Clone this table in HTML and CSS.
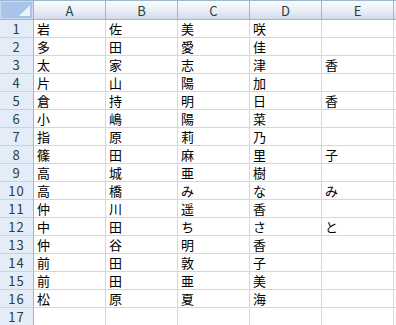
FILE: index.html
```html
<!DOCTYPE html>
<html>
<head>
<meta charset="utf-8">
<link rel="stylesheet" href="styles.css">
</head>
<body>
<div class="sheet">
  <div class="corner"><span class="tri"></span></div>
  <div class="ch">A</div><div class="ch">B</div><div class="ch">C</div><div class="ch">D</div><div class="ch">E</div><div class="ch ch-x"></div>

  <div class="rh">1</div><div class="c">岩</div><div class="c">佐</div><div class="c">美</div><div class="c">咲</div><div class="c"></div><div class="c cx"></div>
  <div class="rh">2</div><div class="c">多</div><div class="c">田</div><div class="c">愛</div><div class="c">佳</div><div class="c"></div><div class="c cx"></div>
  <div class="rh">3</div><div class="c">太</div><div class="c">家</div><div class="c">志</div><div class="c">津</div><div class="c">香</div><div class="c cx"></div>
  <div class="rh">4</div><div class="c">片</div><div class="c">山</div><div class="c">陽</div><div class="c">加</div><div class="c"></div><div class="c cx"></div>
  <div class="rh">5</div><div class="c">倉</div><div class="c">持</div><div class="c">明</div><div class="c">日</div><div class="c">香</div><div class="c cx"></div>
  <div class="rh">6</div><div class="c">小</div><div class="c">嶋</div><div class="c">陽</div><div class="c">菜</div><div class="c"></div><div class="c cx"></div>
  <div class="rh">7</div><div class="c">指</div><div class="c">原</div><div class="c">莉</div><div class="c">乃</div><div class="c"></div><div class="c cx"></div>
  <div class="rh">8</div><div class="c">篠</div><div class="c">田</div><div class="c">麻</div><div class="c">里</div><div class="c">子</div><div class="c cx"></div>
  <div class="rh">9</div><div class="c">高</div><div class="c">城</div><div class="c">亜</div><div class="c">樹</div><div class="c"></div><div class="c cx"></div>
  <div class="rh">10</div><div class="c">高</div><div class="c">橋</div><div class="c">み</div><div class="c">な</div><div class="c">み</div><div class="c cx"></div>
  <div class="rh">11</div><div class="c">仲</div><div class="c">川</div><div class="c">遥</div><div class="c">香</div><div class="c"></div><div class="c cx"></div>
  <div class="rh">12</div><div class="c">中</div><div class="c">田</div><div class="c">ち</div><div class="c">さ</div><div class="c">と</div><div class="c cx"></div>
  <div class="rh">13</div><div class="c">仲</div><div class="c">谷</div><div class="c">明</div><div class="c">香</div><div class="c"></div><div class="c cx"></div>
  <div class="rh">14</div><div class="c">前</div><div class="c">田</div><div class="c">敦</div><div class="c">子</div><div class="c"></div><div class="c cx"></div>
  <div class="rh">15</div><div class="c">前</div><div class="c">田</div><div class="c">亜</div><div class="c">美</div><div class="c"></div><div class="c cx"></div>
  <div class="rh">16</div><div class="c">松</div><div class="c">原</div><div class="c">夏</div><div class="c">海</div><div class="c"></div><div class="c cx"></div>
  <div class="rh">17</div><div class="c"></div><div class="c"></div><div class="c"></div><div class="c"></div><div class="c"></div><div class="c cx"></div>
</div>
</body>
</html>
```

FILE: styles.css
```css
html, body {
  margin: 0;
  padding: 0;
  background: #ffffff;
  overflow: hidden;
}

.sheet {
  display: grid;
  grid-template-columns: 34px repeat(5, 72px) 8px;
  grid-template-rows: 20px repeat(17, 18px);
  width: 396px;
  height: 325px;
  overflow: hidden;
  font-family: "Noto Sans CJK JP", "Noto Sans", sans-serif;
}

.corner {
  position: relative;
  box-sizing: border-box;
  border-top: 1px solid #9eb6ce;
  border-right: 1px solid #9eb6ce;
  border-bottom: 1px solid #9eb6ce;
  background: #a9c4e9;
  box-shadow: inset 1px 1px 0 #c9daf2, inset -1px -1px 0 #c9daf2;
}

.tri {
  position: absolute;
  right: 3px;
  bottom: 3px;
  width: 0;
  height: 0;
  border-left: 11px solid transparent;
  border-bottom: 11px solid #eef3fa;
}

.ch {
  box-sizing: border-box;
  border-top: 1px solid #9eb6ce;
  border-right: 1px solid #9eb6ce;
  border-bottom: 1px solid #9eb6ce;
  background: linear-gradient(#f9fcfd 0%, #e8eef7 55%, #d3dbe9 100%);
  color: #27413e;
  font-family: "Noto Sans CJK JP", "Noto Sans", sans-serif;
  font-size: 13px;
  display: flex;
  align-items: center;
  justify-content: center;
  line-height: 14px;
  padding-top: 1px;
}

.rh {
  box-sizing: border-box;
  border-right: 1px solid #9eb6ce;
  border-bottom: 1px solid #c5d3e6;
  background: #e4ecf7;
  color: #27413e;
  font-family: "Noto Sans CJK JP", "Noto Sans", sans-serif;
  font-size: 13px;
  display: flex;
  align-items: flex-end;
  justify-content: center;
  line-height: 14px;
  padding-bottom: 1px;
  letter-spacing: 1px;
}

.c {
  box-sizing: border-box;
  border-right: 1px solid #d0d7e5;
  border-bottom: 1px solid #d0d7e5;
  font-size: 13px;
  line-height: 14px;
  color: #000000;
  display: flex;
  align-items: flex-end;
  padding-left: 3px;
  padding-bottom: 1px;
}

.cx {
  border-right: none;
}
```
